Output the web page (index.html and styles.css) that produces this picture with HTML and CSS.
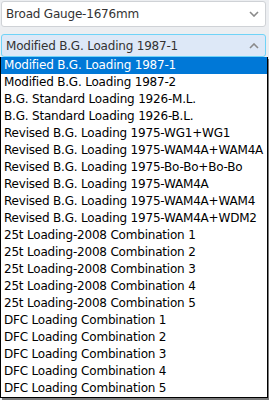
FILE: index.html
```html
<!DOCTYPE html>
<html lang="en">
<head>
    <meta charset="UTF-8">
    <meta name="viewport" content="width=device-width, initial-scale=1.0">
    <title>Loading Standard</title>
    <link rel="stylesheet" href="styles.css">
</head>
<body>
    <div class="picker">
        <div class="select-box">
            <span>Broad Gauge-1676mm</span>
            <svg class="chevron" width="10" height="6" viewBox="0 0 10 6"><path d="M1 1 L5 5 L9 1" fill="none" stroke="#8a8a8a" stroke-width="1.6"/></svg>
        </div>

        <div class="select-box open">
            <span>Modified B.G. Loading 1987-1</span>
            <svg class="chevron" width="10" height="6" viewBox="0 0 10 6"><path d="M1 5 L5 1 L9 5" fill="none" stroke="#8a8a8a" stroke-width="1.6"/></svg>
        </div>

        <div class="option-list">
            <div class="option selected">Modified B.G. Loading 1987-1</div>
            <div class="option">Modified B.G. Loading 1987-2</div>
            <div class="option">B.G. Standard Loading 1926-M.L.</div>
            <div class="option">B.G. Standard Loading 1926-B.L.</div>
            <div class="option">Revised B.G. Loading 1975-WG1+WG1</div>
            <div class="option">Revised B.G. Loading 1975-WAM4A+WAM4A</div>
            <div class="option">Revised B.G. Loading 1975-Bo-Bo+Bo-Bo</div>
            <div class="option">Revised B.G. Loading 1975-WAM4A</div>
            <div class="option">Revised B.G. Loading 1975-WAM4A+WAM4</div>
            <div class="option">Revised B.G. Loading 1975-WAM4A+WDM2</div>
            <div class="option">25t Loading-2008 Combination 1</div>
            <div class="option">25t Loading-2008 Combination 2</div>
            <div class="option">25t Loading-2008 Combination 3</div>
            <div class="option">25t Loading-2008 Combination 4</div>
            <div class="option">25t Loading-2008 Combination 5</div>
            <div class="option">DFC Loading Combination 1</div>
            <div class="option">DFC Loading Combination 2</div>
            <div class="option">DFC Loading Combination 3</div>
            <div class="option">DFC Loading Combination 4</div>
            <div class="option">DFC Loading Combination 5</div>
        </div>
    </div>
</body>
</html>
```

FILE: styles.css
```css
body {
    margin: 0;
    padding: 0;
    background-color: #eceef1;
    font-family: "DejaVu Sans", sans-serif;
    font-size: 12px;
    letter-spacing: -0.2px;
}
.picker {
    width: 269px;
    height: 400px;
    overflow: hidden;
}
.select-box {
    display: flex;
    align-items: center;
    justify-content: space-between;
    box-sizing: border-box;
    margin: 1px 3px 0 1px;
    height: 26px;
    padding: 0 6px 0 4px;
    background-color: white;
    border: 1px solid #cfd2d6;
    border-radius: 3px;
    color: #333;
}
.select-box.open {
    margin-top: 7px;
    height: 23px;
    background-color: #dde8f7;
    border-color: #6fd3f7;
}
.chevron {
    flex-shrink: 0;
}
.option-list {
    width: 268px;
    box-sizing: border-box;
    border: 1px solid #000;
    border-top: none;
    background-color: white;
    box-shadow: 2px 2px 0 #7a7a7a;
}
.option {
    height: 17px;
    line-height: 17px;
    padding-left: 3px;
    color: #000;
    white-space: nowrap;
}
.option.selected {
    background-color: #0078d7;
    color: white;
}
```
